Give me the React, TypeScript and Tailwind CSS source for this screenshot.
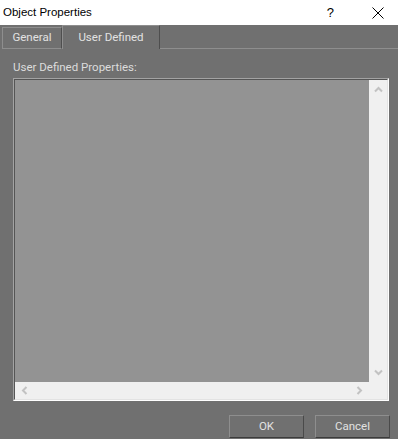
import React from "react";

const Chevron = ({ dir }: { dir: "up" | "down" | "left" | "right" }) => {
  const rot = { up: 0, right: 90, down: 180, left: 270 }[dir];
  return (
    <svg width="9" height="9" viewBox="0 0 9 9" style={{ transform: `rotate(${rot}deg)` }}>
      <path d="M1 6.5 L4.5 3 L8 6.5" fill="none" stroke="#c2c2c2" strokeWidth="2" />
    </svg>
  );
};

export default function App() {
  return (
    <div className="w-[398px] h-[439px] bg-[#707070] flex flex-col overflow-hidden font-['Roboto',Arial,sans-serif] text-[11.5px]">
      {/* Title bar */}
      <div className="h-[25px] bg-white flex items-center shrink-0 font-['Liberation_Sans',Arial,sans-serif]">
        <span className="pl-[3px] text-black text-[11.5px] leading-none">Object Properties</span>
        <div className="flex-1" />
        <span className="text-black text-[13px] leading-none mr-[38px]">?</span>
        <svg width="12" height="12" viewBox="0 0 12 12" className="mr-[14px]">
          <path d="M0.5 0.5 L11.5 11.5 M11.5 0.5 L0.5 11.5" stroke="#000" strokeWidth="1" />
        </svg>
      </div>
      {/* Tabs */}
      <div className="h-[24px] flex items-end shrink-0 pl-[2px]">
        <div className="w-[60px] h-[22px] border-l border-t border-r border-b border-l-[#8e8e8e] border-t-[#8e8e8e] border-r-[#4e4e4e] border-b-[#8e8e8e] flex items-center justify-center text-[#e2e2e2]">
          General
        </div>
        <div className="w-[98px] h-[24px] border-l border-t border-r border-l-[#8e8e8e] border-t-[#8e8e8e] border-r-[#4e4e4e] flex items-center justify-center text-[#e2e2e2] pt-[1px]">
          User Defined
        </div>
        <div className="flex-1 h-[24px] border-b border-b-[#8e8e8e]" />
      </div>
      {/* Body */}
      <div className="flex flex-col px-[13px] pt-[11px]">
        <div className="text-[#dcdcdc] leading-[14px] mb-[4px]">User Defined Properties:</div>
        <div className="w-[376px] h-[323px] border border-t-[#a3a3a3] border-l-[#a3a3a3] border-r-white border-b-white">
          <div className="w-full h-full border border-t-[#555555] border-l-[#555555] border-r-[#e3e3e3] border-b-[#e3e3e3] grid grid-cols-[1fr_18px] grid-rows-[1fr_17px]">
            <div className="bg-[#939393]" />
            <div className="bg-[#f0f0f0] flex flex-col items-center justify-between py-[5px]">
              <Chevron dir="up" />
              <Chevron dir="down" />
            </div>
            <div className="bg-[#f0f0f0] flex items-center justify-between px-[5px]">
              <Chevron dir="left" />
              <Chevron dir="right" />
            </div>
            <div className="bg-[#f0f0f0]" />
          </div>
        </div>
      </div>
      {/* Buttons */}
      <div className="flex justify-end gap-[11px] pr-[8px] mt-[14px]">
        <div className="w-[75px] h-[23px] border border-t-[#8e8e8e] border-l-[#8e8e8e] border-r-[#4a4a4a] border-b-[#3c3c3c] flex items-center justify-center text-[#e2e2e2]">
          OK
        </div>
        <div className="w-[75px] h-[23px] border border-t-[#8e8e8e] border-l-[#8e8e8e] border-r-[#4a4a4a] border-b-[#3c3c3c] flex items-center justify-center text-[#e2e2e2]">
          Cancel
        </div>
      </div>
    </div>
  );
}
